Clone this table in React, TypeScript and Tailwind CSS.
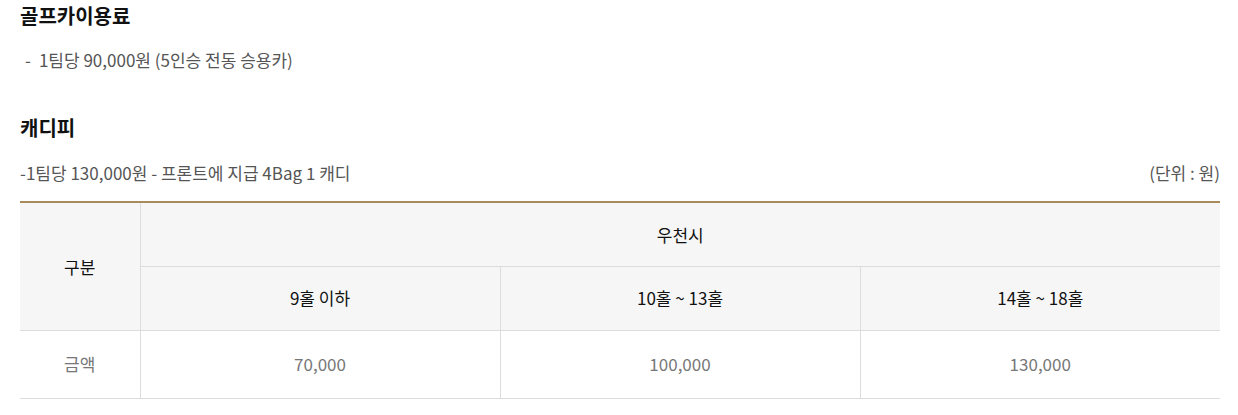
export default function App() {
  const font = { fontFamily: '"Noto Sans CJK KR", "Noto Sans", sans-serif' };
  return (
    <div className="w-[1238px] bg-white pl-5 pr-[18px]" style={font}>
      <h3 className="pt-[2px] text-[20px] font-bold leading-[28px] text-[#111]">골프카이용료</h3>
      <p className="mt-[17px] pl-[5px] text-[17px] leading-[26px] text-[#555]">
        -<span className="ml-[8px]">1팀당 90,000원 (5인승 전동 승용카)</span>
      </p>

      <h3 className="mt-[41px] text-[20px] font-bold leading-[28px] text-[#111]">캐디피</h3>
      <div className="mt-[18px] flex items-center justify-between text-[17px] leading-[26px] text-[#555]">
        <span>-1팀당 130,000원 - 프론트에 지급 4Bag 1 캐디</span>
        <span>(단위 : 원)</span>
      </div>

      <table className="mt-[15px] w-full table-fixed border-collapse border-t-2 border-t-[#a88b5c] text-[17px]">
        <colgroup>
          <col className="w-[120px]" />
          <col />
          <col />
          <col />
        </colgroup>
        <thead>
          <tr className="h-[64px] bg-[#f6f6f6] text-[#111]">
            <th rowSpan={2} className="border-b border-r border-[#dcdcdc] font-normal">구분</th>
            <th colSpan={3} className="border-b border-[#dcdcdc] font-normal">우천시</th>
          </tr>
          <tr className="h-[64px] bg-[#f6f6f6] text-[#111]">
            <th className="border-b border-r border-[#dcdcdc] font-normal">9홀 이하</th>
            <th className="border-b border-r border-[#dcdcdc] font-normal">10홀 ~ 13홀</th>
            <th className="border-b border-[#dcdcdc] font-normal">14홀 ~ 18홀</th>
          </tr>
        </thead>
        <tbody>
          <tr className="h-[68px] text-center text-[#777]">
            <td className="border-b border-r border-[#dcdcdc]">금액</td>
            <td className="border-b border-r border-[#dcdcdc]">70,000</td>
            <td className="border-b border-r border-[#dcdcdc]">100,000</td>
            <td className="border-b border-[#dcdcdc]">130,000</td>
          </tr>
        </tbody>
      </table>
      <div className="h-[16px]" />
    </div>
  );
}
